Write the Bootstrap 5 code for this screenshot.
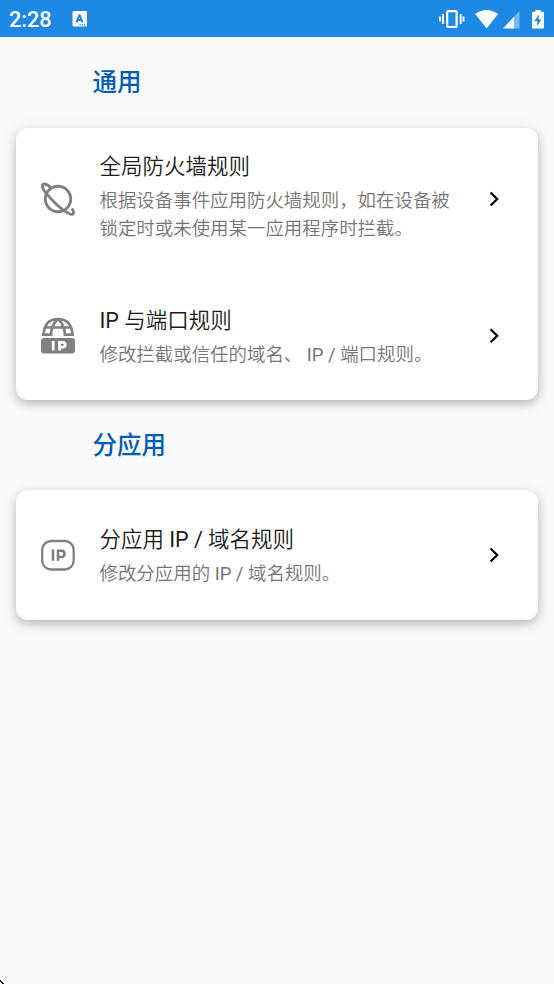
<!DOCTYPE html>
<html lang="zh-CN">
<head>
<meta charset="utf-8">
<meta name="viewport" content="width=device-width, initial-scale=1">
<title>防火墙规则</title>
<link href="https://cdn.jsdelivr.net/npm/bootstrap@5.3.0/dist/css/bootstrap.min.css" rel="stylesheet">
<style>
body{background:#fafafa;font-family:Roboto,"Noto Sans CJK SC",sans-serif;height:984px;overflow:hidden;position:relative}
.status-bar{height:37px;background:#1e88e5;color:#fff;padding:0 0 0 9px}
.clock{font-size:21.7px;line-height:37px;font-weight:500;width:63px;padding-top:1px}
.section-title{font-size:24.5px;line-height:36px;font-weight:500;color:#005db3;margin:0 0 0 92.5px;height:90px;padding-top:28px}
.rule-card{margin:0 16px;border:0;border-radius:12px;background:#fff;box-shadow:0 4px 8px rgba(0,0,0,.17),0 3px 16px rgba(0,0,0,.13)}
.first-card{margin-top:.5px}
.rule-row{padding:0 34px 0 23px;color:#212121}
.row-tall{height:142.5px}
.row-mid{height:130px}
.rule-icon{width:38px;height:38px;color:#808080}
.rule-text{margin-left:22.5px}
.row-mid .rule-text{padding-top:2px}
.row-tall .rule-text{padding-bottom:3px}
.first-card .row-mid .rule-text{padding-top:4px}
.rule-name{font-size:21.5px;line-height:32px;font-weight:350;color:#1c1c1c}
.rule-desc{font-size:18.46px;line-height:27.7px;font-weight:350;color:#757575;white-space:nowrap;margin-top:5px}
.latin{font-weight:400}
.corner{position:absolute;left:0;bottom:0}
</style>
<script src="https://cdn.jsdelivr.net/npm/bootstrap@5.3.0/dist/js/bootstrap.bundle.min.js"></script>
</head>
<body>
<header class="status-bar d-flex align-items-center">
  <div class="clock">2:28</div>
  <svg width="16" height="18" viewBox="0 0 16 18"><rect x="0.5" y="1" width="14.5" height="15.5" rx="1.5" fill="#fff"/><path d="M4.400 12.300 7.300 5.200H7.700L10.600 12.300M5.700 10h3.600" fill="none" stroke="#1e88e5" stroke-width="2"/><path d="M7.500 14.800h1.400m.8 0h1.400m.8 0h1.400" stroke="#1e88e5" stroke-width="1.300"/></svg>
  <svg class="ms-auto" width="115" height="24" viewBox="0 0 115 24" fill="#fff">
    <path d="M1 9.500v5M4 7v10M21.700 7v10M24.500 9.500v5" stroke="#fff" stroke-width="1.900"/>
    <rect x="8.200" y="4.200" width="9.400" height="15.800" rx="1" fill="none" stroke="#fff" stroke-width="2.200"/>
    <path d="M36.200 7Q47.700-1 59 7L47.700 21.500Z"/>
    <path d="M64 21.500H75V9.800Z"/><path d="M75 9.800 80.500 4.300V21.500H75Z" opacity=".4"/>
    <path d="M94 4.800h2.500V3h5v1.800H104q1 0 1 1V20.500q0 1-1 1h-10q-1 0-1-1V5.800q0-1 1-1Z"/>
    <path d="M100 7.500 95.300 14h2.900v5.200l4.100-6.600h-2.700Z" fill="#1e88e5"/>
  </svg>
</header>
<main>
  <h2 class="section-title">通用</h2>
  <section class="card rule-card first-card">
    <div class="rule-row row-tall d-flex align-items-center">
      <svg class="rule-icon flex-shrink-0" viewBox="0 0 38 38" fill="none" stroke="currentColor" stroke-width="2.900"><circle cx="19" cy="19" r="12.700"/><path d="M8.200 14.500C5.500 11.500 3.300 7.500 3.300 5.800C3.300 2.800 7.500 3.500 11.700 7.500M7.500 13.500C12 19.500 23 30.800 31 34Q34.500 35.300 34.500 32.500Q34.500 31 33.500 29.500" stroke-linecap="round"/></svg>
      <div class="rule-text flex-grow-1"><div class="rule-name">全局防火墙规则</div><div class="rule-desc">根据设备事件应用防火墙规则，如在设备被<br>锁定时或未使用某一应用程序时拦截。</div></div>
      <svg class="flex-shrink-0" width="20" height="20" viewBox="0 0 20 20" fill="none" stroke="#000" stroke-width="2.200"><path d="M6.600 3.500 13.200 10 6.600 16.500"/></svg>
    </div>
    <div class="rule-row row-mid d-flex align-items-center">
      <svg class="rule-icon flex-shrink-0" viewBox="0 0 38 38" fill="none" stroke="currentColor" stroke-width="2.700"><path d="M4.500 20Q5 3 19 3T33.500 20M12 20Q12 9 19 3Q26 9 26 20M7 11.500H31M3 18.600H12M26 18.600H35"/><rect x="2" y="22" width="34" height="15.500" rx="3" fill="currentColor" stroke="none"/><path d="M14.200 25v9.500M20.500 34.500v-8.200h3q2.700 0 2.700 2.400t-2.700 2.400h-3" stroke="#fff"/></svg>
      <div class="rule-text flex-grow-1"><div class="rule-name"><span class="latin">IP</span> 与端口规则</div><div class="rule-desc">修改拦截或信任的域名、 <span class="latin">IP /</span> 端口规则。</div></div>
      <svg class="flex-shrink-0" width="20" height="20" viewBox="0 0 20 20" fill="none" stroke="#000" stroke-width="2.200"><path d="M6.600 4.200 13.200 10.700 6.600 17.200"/></svg>
    </div>
  </section>
  <h2 class="section-title">分应用</h2>
  <section class="card rule-card">
    <div class="rule-row row-mid d-flex align-items-center">
      <svg class="rule-icon flex-shrink-0" viewBox="0 0 38 38" fill="none" stroke="currentColor" stroke-width="2.300"><rect x="3.200" y="5" width="31.500" height="28.500" rx="9"/><path stroke-width="2.500" d="M14 13.500v11.300M19 24.800V14.700h3.500q3 0 3 3.100t-3 3.100H19"/></svg>
      <div class="rule-text flex-grow-1"><div class="rule-name">分应用 <span class="latin">IP /</span> 域名规则</div><div class="rule-desc">修改分应用的 <span class="latin">IP /</span> 域名规则。</div></div>
      <svg class="flex-shrink-0" width="20" height="20" viewBox="0 0 20 20" fill="none" stroke="#000" stroke-width="2.200"><path d="M6.600 3.500 13.200 10 6.600 16.500"/></svg>
    </div>
  </section>
</main>
<svg class="corner" width="5" height="5" viewBox="0 0 5 5"><path d="M0 1h1v1h1v1h1v1h1v1H2V4H1V3H0Z" fill="#222"/></svg>
</body>
</html>
